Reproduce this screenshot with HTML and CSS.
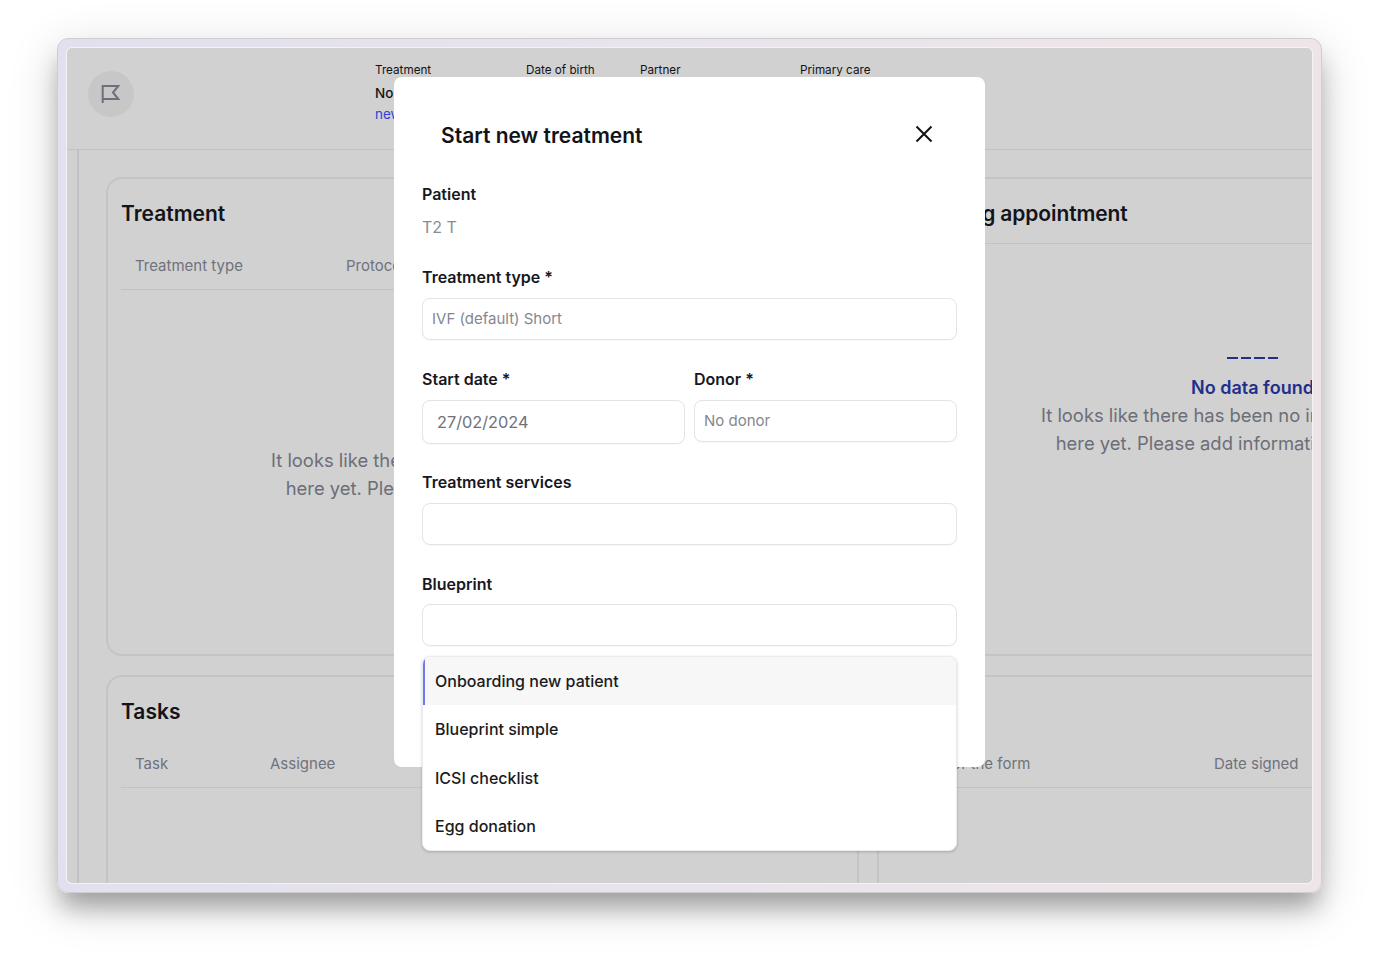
FILE: index.html
```html
<!DOCTYPE html>
<html lang="en">
<head>
<meta charset="utf-8">
<title>Start new treatment</title>
<link rel="stylesheet" href="styles.css">
</head>
<body>
<div class="frame">
  <div class="app">
    <header class="top">
      <div class="flag">
        <svg width="24" height="24" viewBox="0 0 24 24" fill="none" stroke="#6d707b" stroke-width="2" stroke-linejoin="miter"><path d="M3.7 22V5h15.6l-5.3 6.5 5.3 6.5H3.7"/></svg>
      </div>
      <div class="meta">
        <div class="meta-col c1"><div class="meta-label">Treatment</div><div class="meta-value">No active</div><div class="meta-link">new treatment</div></div>
        <div class="meta-col c2"><div class="meta-label">Date of birth</div></div>
        <div class="meta-col c3"><div class="meta-label">Partner</div></div>
        <div class="meta-col c4"><div class="meta-label">Primary care</div></div>
      </div>
    </header>
    <div class="body">
      <div class="rail"></div>
      <main class="grid">
        <section class="card tall">
          <h2 class="card-title">Treatment</h2>
          <div class="thead t-treat"><span>Treatment type</span><span>Protocol</span></div>
          <div class="empty pad-left">
            <div class="dashes"></div>
            <div class="empty-title">No data found</div>
            <p class="empty-text">It looks like there has been no information added<br>here yet. Please add information to see them.</p>
          </div>
        </section>
        <section class="card tall wide">
          <h2 class="card-title ruled">Upcoming appointment</h2>
          <div class="empty pad-right">
            <div class="dashes"></div>
            <div class="empty-title">No data found</div>
            <p class="empty-text">It looks like there has been no information added<br>here yet. Please add information to see them.</p>
          </div>
        </section>
        <section class="card">
          <h2 class="card-title">Tasks</h2>
          <div class="thead t-tasks"><span>Task</span><span>Assignee</span></div>
        </section>
        <section class="card wide">
          <h2 class="card-title">Forms</h2>
          <div class="thead t-forms"><span>Name of the form</span><span>Date signed</span></div>
        </section>
      </main>
    </div>

    <div class="modal">
      <div class="modal-head">
        <h1 class="modal-title">Start new treatment</h1>
        <svg class="close" width="18" height="18" viewBox="0 0 18 18" fill="none" stroke="#111318" stroke-width="2"><path d="M1.5 1.5l15 15M16.5 1.5l-15 15"/></svg>
      </div>
      <div class="field f-patient">
        <div class="label">Patient</div>
        <div class="static">T2 T</div>
      </div>
      <div class="field">
        <div class="label">Treatment type<span class="req">*</span></div>
        <div class="input">IVF (default) Short</div>
      </div>
      <div class="split">
        <div class="field">
          <div class="label">Start date<span class="req">*</span></div>
          <div class="input date">27/02/2024</div>
        </div>
        <div class="field">
          <div class="label">Donor<span class="req">*</span></div>
          <div class="input">No donor</div>
        </div>
      </div>
      <div class="field">
        <div class="label">Treatment services</div>
        <div class="input"></div>
      </div>
      <div class="field f-last">
        <div class="label">Blueprint</div>
        <div class="input"></div>
      </div>
      <ul class="menu">
        <li class="menu-item active">Onboarding new patient</li>
        <li class="menu-item">Blueprint simple</li>
        <li class="menu-item">ICSI checklist</li>
        <li class="menu-item">Egg donation</li>
      </ul>
    </div>
  </div>
</div>
</body>
</html>
```
FILE: styles.css
```css
* { box-sizing: border-box; }
html, body { margin: 0; height: 100%; background: #fff; overflow: hidden; }
body { font-family: Inter, "Liberation Sans", sans-serif; color: #111318; padding: 38px 56px 0 57px; }

.frame {
  width: 1265px; height: 855px; padding: 9px;
  border-radius: 11px;
  background: linear-gradient(90deg, #e2e0ef 0%, #e8e4ec 45%, #efe5e7 100%);
  border: 1px solid #cfcdd2;
  box-shadow: 0 18px 24px -4px rgba(0,0,0,.3), 0 12px 50px rgba(0,0,0,.16);
}
.app {
  position: relative; height: 100%; overflow: hidden;
  background: #d1d1d1; border-radius: 5px;
  box-shadow: 0 0 0 1px #f3f3f5;
}

.top { height: 102px; border-bottom: 1px solid #c2c2c2; display: flex; padding: 23px 0 0 21px; }
.flag { width: 46px; height: 46px; border-radius: 50%; background: #c7c7c7; display: flex; align-items: center; justify-content: center; }
.flag svg { display: block; margin: 0 1px 2px 0; }
.meta { display: flex; margin-left: 241px; margin-top: -8px; }
.meta-col { font-size: 11.7px; }
.c1 { width: 151px; } .c2 { width: 114px; } .c3 { width: 160px; }
.meta-label { line-height: 14px; white-space: nowrap; }
.meta-value { font-size: 13.5px; font-weight: 500; line-height: 18px; margin-top: 7px; white-space: nowrap; }
.meta-link { font-size: 13.5px; color: #2f3fd8; line-height: 18px; margin-top: 3px; white-space: nowrap; }

.body { display: flex; height: 733px; }
.rail { width: 12px; flex: none; border-right: 2px solid #c2c2c2; }
.grid {
  display: grid; grid-template-columns: 753px 751px; grid-template-rows: 479px 400px;
  column-gap: 18px; row-gap: 19px; padding: 27px 0 0 27px;
}

.card { border: 2px solid #c4c4c4; border-radius: 16px; padding: 0 13px; display: flex; flex-direction: column; height: 100%; }
.tall { height: 479px; }
.card-title { margin: 0; font-size: 21px; font-weight: 600; line-height: 28px; padding-top: 21px; color: #131419; }
.card-title.ruled { margin: 0 -13px 0 0; padding-bottom: 15px; border-bottom: 1px solid #c2c2c2; height: 65px; letter-spacing: -.1px; }
.thead {
  display: flex; font-size: 15px; color: #70727c; line-height: 20px;
  height: 52px; padding: 18px 0 0 14px; border-bottom: 1px solid #c2c2c2; margin-top: 10px; white-space: nowrap;
}
.t-treat span:first-child { width: 211px; }
.t-tasks span:first-child { width: 135px; }
.t-forms span:first-child { width: 308px; }

.empty { flex: 1; display: flex; flex-direction: column; align-items: center; justify-content: center; }
.pad-left { padding-bottom: 40px; }
.pad-right { padding-bottom: 84px; }
.dashes { width: 51px; height: 2px; background: repeating-linear-gradient(90deg, #1f2f8c 0 10.5px, transparent 10.5px 13.5px); }
.empty-title { font-size: 18px; font-weight: 600; color: #1f2f8c; line-height: 28px; margin-top: 15px; }
.empty-text { margin: -1px 0 1px; font-size: 18.4px; line-height: 28px; color: #6c6e78; text-align: center; white-space: nowrap; }

.modal {
  position: absolute; left: 327px; top: 29px; width: 591px; height: 690px;
  background: #fff; border-radius: 8px; padding: 0 28px;
}
.modal-head { display: flex; justify-content: space-between; align-items: center; height: 56px; margin-top: 31px; padding: 0 24px 0 19px; }
.modal-title { margin: 0; font-size: 21px; font-weight: 600; line-height: 28px; color: #111318; }
.close { display: block; margin-bottom: 4px; }
.field { display: flex; flex-direction: column; flex: 1; min-width: 0; }
.label { font-size: 16px; font-weight: 600; line-height: 22px; height: 22px; color: #17181d; margin: 0 0 10px; }
.req { margin-left: 4px; }
.static { font-size: 16px; line-height: 22px; color: #8a8c94; height: 22px; margin-top: 1px; }
.f-patient { margin-top: 19px; margin-bottom: 28px; }
.f-last .label { margin-bottom: 9px; }
.input {
  height: 42px; border: 1px solid #e3e4e6; border-radius: 8px; background: #fff;
  font-size: 15px; color: #85878f; padding: 0 9px; line-height: 40px;
  margin-bottom: 28px; box-shadow: 0 1px 1px rgba(0,0,0,.03);
}
.date { height: 44px; font-size: 16.3px; padding: 0 14px; color: #6f717b; line-height: 42px; margin-bottom: 27px; }
.split { display: flex; gap: 9px; }
.menu {
  position: absolute; left: 28px; top: 579px; width: 535px; height: 195px; margin: 0; padding: 0;
  list-style: none; background: #fff; border-radius: 8px; border: 1px solid #ececee;
  box-shadow: 0 1px 3px rgba(0,0,0,.2); overflow: hidden;
}
.menu-item { height: 48.3px; line-height: 49px; padding-left: 12px; font-size: 16px; font-weight: 500; color: #1a1b20; }
.menu-item.active { background: #f7f7f7; box-shadow: inset 2px 0 0 #6f78ee; }
```
